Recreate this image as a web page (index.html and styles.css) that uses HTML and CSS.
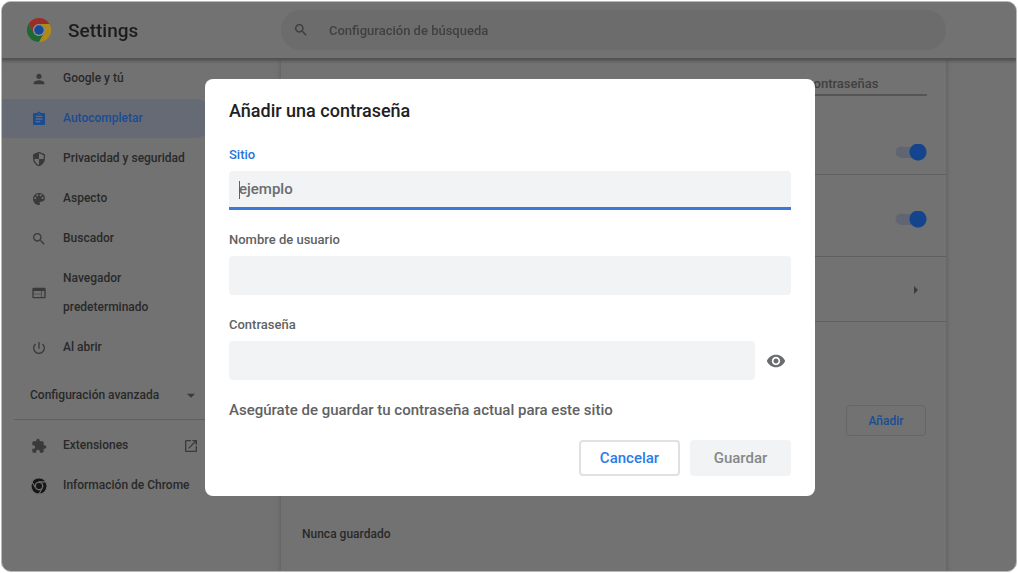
FILE: index.html
```html
<!DOCTYPE html>
<html lang="es">
<head>
    <meta charset="UTF-8">
    <meta name="viewport" content="width=device-width, initial-scale=1.0">
    <title>Settings</title>
    <link rel="stylesheet" href="styles.css">
</head>
<body>
    <div class="window">
        <header class="toolbar">
            <div class="brand">
                <svg class="logo" viewBox="0 0 48 48" aria-hidden="true">
                    <path fill="#9a2d25" d="M3.2 12A24 24 0 0 1 44.8 12H24A12 12 0 0 0 13.6 30Z"/>
                    <path fill="#1d6833" d="M3.2 12L13.6 30A12 12 0 0 0 34.4 30L24 48A24 24 0 0 1 3.2 12Z"/>
                    <path fill="#b08a18" d="M44.8 12A24 24 0 0 1 24 48L34.4 30A12 12 0 0 0 24 12Z"/>
                    <circle cx="24" cy="24" r="12" fill="#8b8f90"/>
                    <circle cx="24" cy="24" r="9.5" fill="#174a96"/>
                </svg>
                <h1>Settings</h1>
            </div>
            <label class="search">
                <svg class="icon" viewBox="0 0 24 24" aria-hidden="true"><path d="M15.5 14h-.79l-.28-.27C15.41 12.59 16 11.11 16 9.5 16 5.91 13.09 3 9.5 3S3 5.91 3 9.5 5.91 16 9.5 16c1.61 0 3.09-.59 4.23-1.57l.27.28v.79l5 4.99L20.49 19l-4.99-5zm-6 0C7.01 14 5 11.99 5 9.5S7.01 5 9.5 5 14 7.01 14 9.5 11.99 14 9.5 14z"/></svg>
                <input type="search" placeholder="Configuración de búsqueda" aria-label="Configuración de búsqueda">
            </label>
        </header>

        <div class="content">
            <nav class="sidebar">
                <a class="nav-item" href="#google">
                    <svg class="icon" viewBox="0 0 24 24" aria-hidden="true"><path d="M12 12c2.21 0 4-1.79 4-4s-1.79-4-4-4-4 1.79-4 4 1.79 4 4 4zm0 2c-2.67 0-8 1.34-8 4v2h16v-2c0-2.66-5.33-4-8-4z"/></svg>
                    <span>Google y tú</span>
                </a>
                <a class="nav-item active" href="#autocompletar">
                    <svg class="icon" viewBox="0 0 24 24" aria-hidden="true"><path d="M19 3h-4.18C14.4 1.84 13.3 1 12 1c-1.3 0-2.4.84-2.82 2H5c-1.1 0-2 .9-2 2v14c0 1.1.9 2 2 2h14c1.1 0 2-.9 2-2V5c0-1.1-.9-2-2-2zm-7 0c.55 0 1 .45 1 1s-.45 1-1 1-1-.45-1-1 .45-1 1-1zm2 14H7v-2h7v2zm3-4H7v-2h10v2zm0-4H7V7h10v2z"/></svg>
                    <span>Autocompletar</span>
                </a>
                <a class="nav-item" href="#privacidad">
                    <svg class="icon" viewBox="0 0 24 24" aria-hidden="true"><path transform="matrix(-1 0 0 1 24 0)" d="M12 1L3 5v6c0 5.55 3.84 10.74 9 12 5.16-1.26 9-6.45 9-12V5l-9-4zm0 10.99h7c-.53 4.12-3.28 7.79-7 8.94V12H5V6.3l7-3.11v8.8z"/></svg>
                    <span>Privacidad y seguridad</span>
                </a>
                <a class="nav-item" href="#aspecto">
                    <svg class="icon" viewBox="0 0 24 24" aria-hidden="true"><path d="M12 3c-4.97 0-9 4.03-9 9s4.03 9 9 9c.83 0 1.5-.67 1.5-1.5 0-.39-.15-.74-.39-1.01-.23-.26-.38-.61-.38-.99 0-.83.67-1.5 1.5-1.5H16c2.76 0 5-2.24 5-5 0-4.42-4.03-8-9-8zm-5.5 9c-.83 0-1.5-.67-1.5-1.5S5.67 9 6.5 9 8 9.67 8 10.5 7.33 12 6.5 12zm3-4C8.67 8 8 7.33 8 6.5S8.67 5 9.5 5s1.5.67 1.5 1.5S10.33 8 9.5 8zm5 0c-.83 0-1.5-.67-1.5-1.5S13.67 5 14.5 5s1.5.67 1.5 1.5S15.33 8 14.5 8zm3 4c-.83 0-1.5-.67-1.5-1.5S16.67 9 17.5 9s1.5.67 1.5 1.5-.67 1.5-1.5 1.5z"/></svg>
                    <span>Aspecto</span>
                </a>
                <a class="nav-item" href="#buscador">
                    <svg class="icon" viewBox="0 0 24 24" aria-hidden="true"><path d="M15.5 14h-.79l-.28-.27C15.41 12.59 16 11.11 16 9.5 16 5.91 13.09 3 9.5 3S3 5.91 3 9.5 5.91 16 9.5 16c1.61 0 3.09-.59 4.23-1.57l.27.28v.79l5 4.99L20.49 19l-4.99-5zm-6 0C7.01 14 5 11.99 5 9.5S7.01 5 9.5 5 14 7.01 14 9.5 11.99 14 9.5 14z"/></svg>
                    <span>Buscador</span>
                </a>
                <a class="nav-item" href="#navegador">
                    <svg class="icon" viewBox="0 0 24 24" aria-hidden="true"><path d="M20 4H4c-1.1 0-1.99.9-1.99 2L2 18c0 1.1.9 2 2 2h16c1.1 0 2-.9 2-2V6c0-1.1-.9-2-2-2zm-5 14H4v-4h11v4zm0-5H4V9h11v4zm5 5h-4V9h4v9z"/></svg>
                    <span>Navegador<br>predeterminado</span>
                </a>
                <a class="nav-item" href="#abrir">
                    <svg class="icon" viewBox="0 0 24 24" aria-hidden="true"><path d="M13 3h-2v10h2V3zm4.83 2.17l-1.42 1.42C17.99 7.86 19 9.81 19 12c0 3.87-3.13 7-7 7s-7-3.13-7-7c0-2.19 1.01-4.14 2.58-5.42L6.17 5.17C4.23 6.82 3 9.26 3 12c0 4.97 4.03 9 9 9s9-4.03 9-9c0-2.74-1.23-5.18-3.17-6.83z"/></svg>
                    <span>Al abrir</span>
                </a>
                <button class="advanced" type="button">
                    Configuración avanzada
                    <svg class="icon" viewBox="0 0 24 24" aria-hidden="true"><path d="M6 10l6 6 6-6z"/></svg>
                </button>
                <div class="nav-footer">
                    <a class="nav-item" href="#extensiones">
                        <svg class="icon" viewBox="0 0 24 24" aria-hidden="true"><path d="M20.5 11H19V7c0-1.1-.9-2-2-2h-4V3.5C13 2.12 11.88 1 10.5 1S8 2.12 8 3.5V5H4c-1.1 0-1.99.9-1.99 2v3.8H3.5c1.49 0 2.7 1.21 2.7 2.7s-1.21 2.7-2.7 2.7H2V20c0 1.1.9 2 2 2h3.8v-1.5c0-1.49 1.21-2.7 2.7-2.7 1.49 0 2.7 1.21 2.7 2.7V22H17c1.1 0 2-.9 2-2v-4h1.5c1.38 0 2.5-1.12 2.5-2.5S21.88 11 20.5 11z"/></svg>
                        <span>Extensiones</span>
                        <svg class="icon external" viewBox="0 0 24 24" aria-hidden="true"><path d="M19 19H5V5h7V3H5c-1.11 0-2 .9-2 2v14c0 1.1.89 2 2 2h14c1.1 0 2-.9 2-2v-7h-2v7zM14 3v2h3.59l-9.83 9.83 1.41 1.41L19 6.41V10h2V3h-7z"/></svg>
                    </a>
                    <a class="nav-item" href="#informacion">
                        <svg class="icon chrome" viewBox="0 0 48 48" aria-hidden="true">
                            <path d="M3.2 12A24 24 0 0 1 44.8 12H24A12 12 0 0 0 13.6 30Z"/>
                            <path d="M3.2 12L13.6 30A12 12 0 0 0 34.4 30L24 48A24 24 0 0 1 3.2 12Z"/>
                            <path d="M44.8 12A24 24 0 0 1 24 48L34.4 30A12 12 0 0 0 24 12Z"/>
                            <circle cx="24" cy="24" r="11"/>
                        </svg>
                        <span>Información de Chrome</span>
                    </a>
                </div>
            </nav>

            <main class="panel">
                <div class="row row-search">
                    <input class="filter" type="search" placeholder="Buscar contraseñas" aria-label="Buscar contraseñas">
                </div>
                <div class="row row-toggle">
                    <input class="switch" type="checkbox" aria-label="Preguntar si quiero guardar contraseñas" checked>
                </div>
                <div class="row row-toggle tall">
                    <input class="switch" type="checkbox" aria-label="Iniciar sesión automáticamente" checked>
                </div>
                <div class="row row-link">
                    <button class="arrow" type="button" aria-label="Comprobar contraseñas">
                        <svg class="icon" viewBox="0 0 24 24" aria-hidden="true"><path d="M9 18l6-6-6-6v12z"/></svg>
                    </button>
                </div>
                <div class="row row-add">
                    <button class="add" type="button">Añadir</button>
                </div>
                <h2 class="never">Nunca guardado</h2>
            </main>
        </div>
    </div>

    <div class="overlay">
        <form class="dialog" role="dialog" aria-labelledby="dialogTitle">
            <h2 id="dialogTitle">Añadir una contraseña</h2>

            <div class="field focused">
                <label for="site">Sitio</label>
                <input type="text" id="site" name="site" placeholder="ejemplo">
            </div>
            <div class="field">
                <label for="username">Nombre de usuario</label>
                <input type="text" id="username" name="username">
            </div>
            <div class="field">
                <label for="password">Contraseña</label>
                <div class="password-row">
                    <input type="password" id="password" name="password">
                    <button class="reveal" type="button" aria-label="Mostrar contraseña">
                        <svg viewBox="0 0 24 24" aria-hidden="true"><path d="M12 4.5C7 4.5 2.73 7.61 1 12c1.73 4.39 6 7.5 11 7.5s9.27-3.11 11-7.5c-1.73-4.39-6-7.5-11-7.5zM12 17c-2.76 0-5-2.24-5-5s2.24-5 5-5 5 2.24 5 5-2.24 5-5 5zm0-8c-1.66 0-3 1.34-3 3s1.34 3 3 3 3-1.34 3-3-1.34-3-3-3z"/></svg>
                    </button>
                </div>
            </div>

            <p class="note">Asegúrate de guardar tu contraseña actual para este sitio</p>

            <div class="actions">
                <button class="cancel" type="button">Cancelar</button>
                <button class="save" type="submit" disabled>Guardar</button>
            </div>
        </form>
    </div>
</body>
</html>
```
FILE: styles.css
```css
* {
    box-sizing: border-box;
}

body {
    margin: 0;
    background: #fff;
    color: #292929;
    font-family: Roboto, "Noto Sans", sans-serif;
    font-size: 12px;
    font-weight: 500;
}

input,
button {
    font: inherit;
    color: inherit;
    margin: 0;
    border: none;
    background: none;
}

button {
    cursor: pointer;
}

.window {
    display: flex;
    flex-direction: column;
    min-height: calc(100vh - 2px);
    margin: 1px 1px;
    background: #727272;
    border: 1px solid #b8b8b8;
    border-radius: 10px;
    overflow: hidden;
}

.icon {
    width: 16px;
    height: 16px;
    flex: none;
    fill: #3a3a3a;
}

/* Top bar */
.toolbar {
    display: grid;
    grid-template-columns: 279px 1fr 70px;
    align-items: center;
    height: 56px;
    box-shadow: 0 2px 3px 1px #505050;
    position: relative;
    z-index: 1;
    background: #727272;
}

.brand {
    display: flex;
    align-items: center;
    gap: 17px;
    padding-left: 25px;
}

.logo {
    width: 24px;
    height: 24px;
}

.brand h1 {
    margin: 0;
    font-size: 19px;
    font-weight: 500;
    color: #1c1c1c;
}

.search {
    display: flex;
    align-items: center;
    gap: 20px;
    height: 40px;
    padding: 0 12px;
    border-radius: 20px;
    background: #6c6c6c;
}

.search input {
    flex: 1;
    padding: 0;
    outline: none;
    font-size: 13px;
}

.search input::placeholder,
.filter::placeholder {
    color: #404040;
    opacity: 1;
}

/* Sidebar */
.content {
    display: grid;
    grid-template-columns: 279px 1fr;
    flex: 1;
}

.sidebar {
    padding-top: 1px;
}

.nav-item {
    display: flex;
    align-items: center;
    gap: 16px;
    width: 212px;
    padding: 5px 15px 5px 29px;
    margin-bottom: 1px;
    border-radius: 0 20px 20px 0;
    color: #292929;
    line-height: 29px;
    text-decoration: none;
}

.nav-item.active {
    background: #656a74;
    color: #1a4c94;
}

.nav-item.active .icon {
    fill: #1a4c94;
}

.external {
    margin-left: auto;
}

.chrome {
    fill: #161616;
    stroke: #727272;
    stroke-width: 3;
}

.advanced {
    display: flex;
    align-items: center;
    justify-content: space-between;
    width: 197px;
    height: 40px;
    margin-top: 8px;
    padding: 0 0 0 28px;
}

.nav-footer {
    margin: 4px 12px 0;
    padding-top: 6px;
    border-top: 1px solid #606060;
}

.nav-footer .nav-item {
    margin-left: -12px;
}

/* Password settings */
.panel {
    margin-right: 70px;
    box-shadow: 0 0 4px 1px #606060;
}

.row {
    display: flex;
    align-items: center;
    justify-content: flex-end;
    padding-right: 19px;
}

.row-search {
    align-items: flex-start;
    height: 72px;
    padding-top: 14px;
}

.filter {
    width: 164px;
    height: 24px;
    padding: 0;
    border-bottom: 2px solid #555;
    outline: none;
    font-size: 13px;
}

.row-toggle {
    height: 45px;
    border-bottom: 1px solid #606060;
}

.row-toggle.tall {
    height: 82px;
    padding-top: 7px;
}

.switch {
    appearance: none;
    width: 32px;
    height: 17px;
    background:
        radial-gradient(circle at 23px 8px, #14448c 8px, transparent 9px),
        radial-gradient(circle at 6px 8px, #5f6573 5px, transparent 6px),
        linear-gradient(#5f6573, #5f6573) 6px 3px / 18px 11px no-repeat;
}

.row-link {
    height: 65px;
    border-bottom: 1px solid #606060;
}

.arrow {
    display: flex;
    padding: 2px 3px 0 0;
}

.row-add {
    height: 197px;
    padding-right: 20px;
}

.add {
    width: 80px;
    height: 31px;
    border: 1px solid #666;
    border-radius: 4px;
    color: #1a4c94;
}

.never {
    margin: 8px 21px;
    font-size: 12px;
    font-weight: 500;
}

/* Dialog */
.overlay {
    position: fixed;
    inset: 0;
    display: flex;
    align-items: center;
    justify-content: center;
    padding: 17px 15px 15px 17px;
}

.dialog {
    width: 610px;
    padding: 19px 24px 20px;
    border-radius: 8px;
    background: #fff;
    color: #5f6263;
}

.dialog h2 {
    margin: 0 0 21px;
    font-size: 18px;
    font-weight: 500;
    line-height: 26px;
    color: #202124;
}

.field {
    margin-bottom: 20px;
}

.field label {
    display: block;
    margin-bottom: 6px;
    font-size: 13px;
    line-height: 20px;
}

.field input {
    display: block;
    width: 100%;
    height: 39px;
    padding: 0 10px;
    border-radius: 4px;
    background: #f1f3f4;
    font-size: 15px;
    outline: none;
}

.field.focused label {
    color: #2374e1;
}

/* the active field draws its own blue caret */
.field.focused input {
    border-bottom: 3px solid #3b78d8;
    border-radius: 4px 4px 0 0;
    background: linear-gradient(#1a73c8, #1a73c8) 10px 10px / 1px 18px no-repeat #f1f3f4;
    caret-color: transparent;
}

.field input::placeholder {
    color: #6a6d6f;
    opacity: 1;
}

.password-row {
    display: flex;
    align-items: center;
    gap: 10px;
}

.reveal {
    display: flex;
    padding: 0 5px 0 1px;
}

.reveal svg {
    width: 20px;
    height: 20px;
    fill: #6a6d6f;
}

.note {
    margin: 0 0 20px;
    font-size: 15px;
    line-height: 20px;
}

.actions {
    display: flex;
    justify-content: flex-end;
    gap: 10px;
}

.actions button {
    width: 101px;
    height: 36px;
    border-radius: 4px;
    font-size: 15px;
}

.actions .cancel {
    border: 2px solid #dfe1e3;
    color: #2a7de9;
}

.actions .save {
    background: #f1f3f4;
    color: #858889;
    cursor: default;
}
```
